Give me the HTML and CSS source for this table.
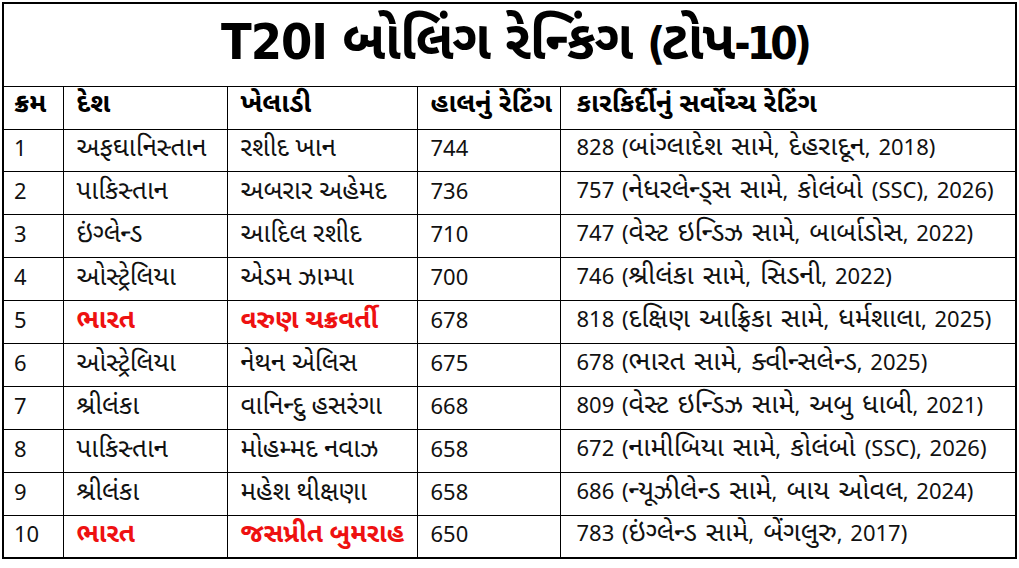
FILE: index.html
```html
<!DOCTYPE html>
<html lang="gu">
<head>
<meta charset="utf-8">
<title>T20I બોલિંગ રેન્કિંગ (ટોપ-10)</title>
<link rel="stylesheet" href="styles.css">
</head>
<body>
<table class="rank">
  <colgroup>
    <col class="c1"><col class="c2"><col class="c3"><col class="c4"><col class="c5">
  </colgroup>
  <thead>
    <tr class="title-row"><th class="title" colspan="5"><span class="tl">T20I</span> બોલિંગ રેન્કિંગ <span class="tl tp">(</span>ટોપ<span class="tl tp">-10)</span></th></tr>
    <tr class="head"><th>ક્રમ</th><th>દેશ</th><th>ખેલાડી</th><th>હાલનું રેટિંગ</th><th>કારકિર્દીનું સર્વોચ્ચ રેટિંગ</th></tr>
  </thead>
  <tbody>
    <tr><td class="num">1</td><td>અફઘાનિસ્તાન</td><td>રશીદ ખાન</td><td class="num">744</td><td class="best"><span class="n">828 (</span>બાંગ્લાદેશ સામે<span class="n">,</span> દેહરાદૂન<span class="n">, 2018)</span></td></tr>
    <tr><td class="num">2</td><td>પાકિસ્તાન</td><td>અબરાર અહેમદ</td><td class="num">736</td><td class="best"><span class="n">757 (</span>નેધરલેન્ડ્સ સામે<span class="n">,</span> કોલંબો <span class="n">(SSC), 2026)</span></td></tr>
    <tr><td class="num">3</td><td>ઇંગ્લેન્ડ</td><td>આદિલ રશીદ</td><td class="num">710</td><td class="best"><span class="n">747 (</span>વેસ્ટ ઇન્ડિઝ સામે<span class="n">,</span> બાર્બાડોસ<span class="n">, 2022)</span></td></tr>
    <tr><td class="num">4</td><td>ઓસ્ટ્રેલિયા</td><td>એડમ ઝામ્પા</td><td class="num">700</td><td class="best"><span class="n">746 (</span>શ્રીલંકા સામે<span class="n">,</span> સિડની<span class="n">, 2022)</span></td></tr>
    <tr><td class="num">5</td><td class="hl">ભારત</td><td class="hl">વરુણ ચક્રવર્તી</td><td class="num">678</td><td class="best"><span class="n">818 (</span>દક્ષિણ આફ્રિકા સામે<span class="n">,</span> ધર્મશાલા<span class="n">, 2025)</span></td></tr>
    <tr><td class="num">6</td><td>ઓસ્ટ્રેલિયા</td><td>નેથન એલિસ</td><td class="num">675</td><td class="best"><span class="n">678 (</span>ભારત સામે<span class="n">,</span> ક્વીન્સલેન્ડ<span class="n">, 2025)</span></td></tr>
    <tr><td class="num">7</td><td>શ્રીલંકા</td><td>વાનિન્દુ હસરંગા</td><td class="num">668</td><td class="best"><span class="n">809 (</span>વેસ્ટ ઇન્ડિઝ સામે<span class="n">,</span> અબુ ધાબી<span class="n">, 2021)</span></td></tr>
    <tr><td class="num">8</td><td>પાકિસ્તાન</td><td>મોહમ્મદ નવાઝ</td><td class="num">658</td><td class="best"><span class="n">672 (</span>નામીબિયા સામે<span class="n">,</span> કોલંબો <span class="n">(SSC), 2026)</span></td></tr>
    <tr><td class="num">9</td><td>શ્રીલંકા</td><td>મહેશ થીક્ષણા</td><td class="num">658</td><td class="best"><span class="n">686 (</span>ન્યૂઝીલેન્ડ સામે<span class="n">,</span> બાય ઓવલ<span class="n">, 2024)</span></td></tr>
    <tr><td class="num">10</td><td class="hl">ભારત</td><td class="hl">જસપ્રીત બુમરાહ</td><td class="num">650</td><td class="best"><span class="n">783 (</span>ઇંગ્લેન્ડ સામે<span class="n">,</span> બેંગલુરુ<span class="n">, 2017)</span></td></tr>
  </tbody>
</table>
</body>
</html>
```

FILE: styles.css
```css
html, body {
  margin: 0;
  padding: 0;
  background: #ffffff;
}
body {
  padding: 2px 0 0 2px;
  font-family: "Noto Sans Gujarati", "Hind Vadodara", "Noto Sans", sans-serif;
  color: #111111;
}
.rank {
  border-collapse: collapse;
  table-layout: fixed;
  width: 1013px;
  border: 2px solid #000;
}
.c1 { width: 60px; }
.c2 { width: 164px; }
.c3 { width: 190px; }
.c4 { width: 143px; }
.c5 { width: 456px; }
.rank th, .rank td {
  border: 1px solid #000;
  text-align: left;
  padding: 0 0 0 13px;
  height: 42.9px;
  box-sizing: border-box;
  line-height: 26px;
  font-size: 26px;
  white-space: nowrap;
  overflow: hidden;
}
.rank td:first-child, .rank th:first-child { padding-left: 10px; }
.rank .num, .n {
  font-family: "Noto Sans", sans-serif;
  font-size: 22px;
}
.rank td.num { padding-bottom: 6px; }
.rank td.best {
  padding-left: 16px;
  padding-bottom: 5px;
  font-size: 27px;
  word-spacing: 2px;
}
.rank .title {
  height: 83px;
  text-align: center;
  font-size: 54px;
  line-height: 56px;
  font-weight: 700;
  padding: 0 0 2px 0;
  color: #000;
  letter-spacing: -1px;
  word-spacing: 2px;
}
.tl {
  font-family: "DejaVu Sans Condensed", "DejaVu Sans", sans-serif;
  font-stretch: condensed;
  font-size: 50px;
  letter-spacing: -1px;
}
.tl.tp {
  font-size: 44px;
  letter-spacing: -4px;
}
.rank .head th {
  font-weight: 700;
  font-size: 27px;
  color: #000;
  height: 43px;
  padding-bottom: 4px;
}
.rank .head th:last-child { padding-left: 16px; }
.hl {
  color: #ee1111;
  font-weight: 700;
}
```
